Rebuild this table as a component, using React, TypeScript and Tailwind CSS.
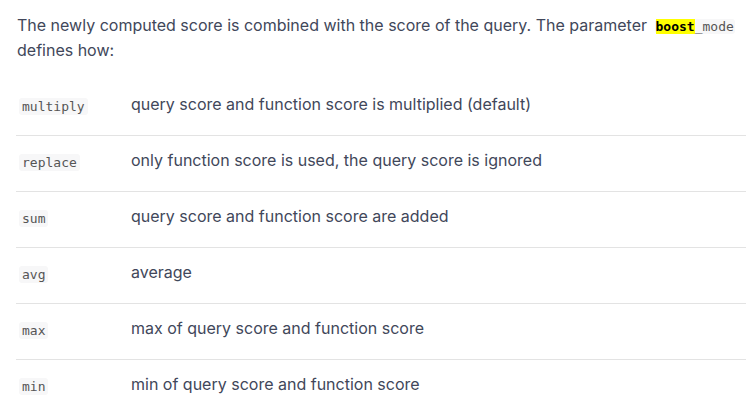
import React from "react";

const rows: [string, string][] = [
  ["multiply", "query score and function score is multiplied (default)"],
  ["replace", "only function score is used, the query score is ignored"],
  ["sum", "query score and function score are added"],
  ["avg", "average"],
  ["max", "max of query score and function score"],
  ["min", "min of query score and function score"],
];

const mono = { fontFamily: '"DejaVu Sans Mono", "Liberation Mono", monospace' };

export default function App() {
  return (
    <div
      className="w-[753px] h-[420px] overflow-hidden bg-white text-[#41475a]"
      style={{ fontFamily: "Inter, 'Noto Sans', sans-serif" }}
    >
      <p className="pl-[17px] pr-2 pt-[13px] text-[16px] leading-[25px]">
        The newly computed score is combined with the score of the query. The parameter{" "}
        <code
          className="ml-[3px] rounded-[3px] bg-[#f7f7f8] px-[1px] text-[13px] leading-[17px] text-[#555]"
          style={mono}
        >
          <span className="bg-[#ffff00] font-bold text-black">boost</span>_mode
        </code>{" "}
        defines how:
      </p>
      <div className="mt-[17px] ml-[16px] w-[730px]">
        {rows.map(([k, v], i) => (
          <div
            key={k}
            className={`flex h-[56px] ${i < rows.length - 1 ? "border-b border-[#e3e3e3]" : ""}`}
          >
            <div className="w-[115px] shrink-0 pl-[3px] pt-[13px]">
              <code
                className="inline-block rounded-[3px] bg-[#f7f7f8] px-[3px] text-[13px] leading-[17px] text-[#555]"
                style={mono}
              >
                {k}
              </code>
            </div>
            <div className="pt-[12px] text-[16px] leading-[24px]">{v}</div>
          </div>
        ))}
      </div>
    </div>
  );
}
